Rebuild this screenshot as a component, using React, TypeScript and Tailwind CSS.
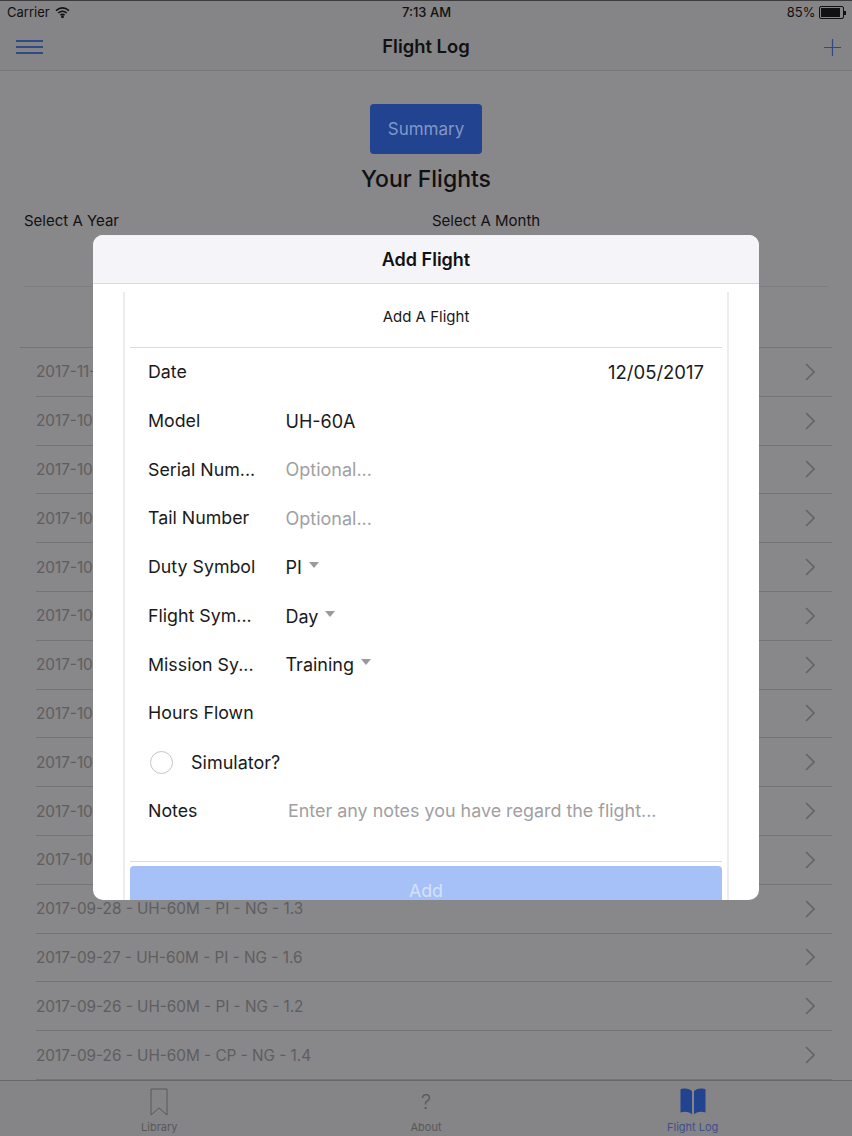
const flights = [
  "2017-11-02 - UH-60M - PI - NG - 1.5",
  "2017-10-30 - UH-60M - PI - NG - 1.2",
  "2017-10-27 - UH-60M - CP - NG - 1.1",
  "2017-10-26 - UH-60M - PI - NG - 1.4",
  "2017-10-24 - UH-60M - PI - NG - 1.3",
  "2017-10-20 - UH-60M - CP - NG - 1.6",
  "2017-10-18 - UH-60M - PI - NG - 1.2",
  "2017-10-16 - UH-60M - PI - NG - 1.0",
  "2017-10-12 - UH-60M - CP - NG - 1.5",
  "2017-10-10 - UH-60M - PI - NG - 1.3",
  "2017-10-04 - UH-60M - PI - NG - 1.1",
  "2017-09-28 - UH-60M - PI - NG - 1.3",
  "2017-09-27 - UH-60M - PI - NG - 1.6",
  "2017-09-26 - UH-60M - PI - NG - 1.2",
  "2017-09-26 - UH-60M - CP - NG - 1.4",
]

function Caret() {
  return <span className="ml-[7px] mb-[5px] h-0 w-0 border-x-[5.5px] border-t-[6px] border-x-transparent border-t-[#9a9a9c]" />
}

function FormRow({ label, value, caret, muted }: { label: string; value?: string; caret?: boolean; muted?: boolean }) {
  return (
    <div className="flex h-[48.75px] items-center pl-[18px]">
      <span className="w-[137.5px] shrink-0 text-[#1a1a1a]">{label}</span>
      <span className={muted ? "text-[18px] text-[#a0a0a3]" : "text-[18px] text-[#1a1a1a]"}>{value}</span>
      {caret && <Caret />}
    </div>
  )
}

export default function App() {
  return (
    <div className="relative flex h-[1136px] w-[852px] flex-col overflow-hidden bg-[#888789] font-['Inter',sans-serif]">
      {/* Status bar */}
      <div className="grid h-[24px] shrink-0 grid-cols-3 items-center border-t border-t-[#3c3c3e] bg-[#858486] pl-[7px] pr-[6px] text-[13px] text-[#111]">
        <div className="flex items-center gap-[5px]">
          <span>Carrier</span>
          <svg width="15" height="11" viewBox="0 0 15 11" fill="none" stroke="#111" strokeWidth="1.6">
            <path d="M1 3.6C5 .3 10 .3 14 3.6" />
            <path d="M3.2 6C5.8 3.9 9.2 3.9 11.8 6" />
            <path d="M5.4 8.2C6.6 7.2 8.4 7.2 9.6 8.2" />
            <circle cx="7.5" cy="9.8" r=".6" fill="#111" />
          </svg>
        </div>
        <span className="text-center font-medium">7:13 AM</span>
        <div className="flex items-center justify-end gap-[4px]">
          <span>85%</span>
          <div className="flex items-center">
            <div className="h-[13px] w-[25px] rounded-[2px] border border-[#111] p-[1px]">
              <div className="h-full w-[88%] bg-[#111]" />
            </div>
            <div className="h-[4px] w-[1.5px] bg-[#111]" />
          </div>
        </div>
      </div>

      {/* Nav bar */}
      <div className="grid h-[47px] shrink-0 grid-cols-3 items-center border-b border-b-[#767577] bg-[#858486] px-[11px]">
        <svg className="ml-[5px]" width="28" height="16" viewBox="0 0 28 16" stroke="#2f4a86" strokeWidth="2">
          <path d="M0 2H27M0 8H27M0 14H27" />
        </svg>
        <span className="text-center text-[18.4px] font-semibold text-[#111]">Flight Log</span>
        <svg className="justify-self-end" width="17" height="17" viewBox="0 0 17 17" stroke="#2f4a86" strokeWidth="1.2">
          <path d="M8.500 0V17M0 8.500H17" />
        </svg>
      </div>

      {/* Page content */}
      <div className="flex min-h-0 flex-1 flex-col overflow-hidden">
        <div className="flex flex-col items-center pt-[33px]">
          <div className="flex h-[50px] w-[112px] items-center justify-center rounded-[4px] bg-[#22438f] pt-[2px] text-[17px] text-[#8097c9]">
            Summary
          </div>
          <h1 className="mt-[10px] text-[23px] leading-[30px] font-medium text-[#111]">Your Flights</h1>
        </div>
        <div className="mt-[15px] flex text-[15px] leading-[24px] text-[#111]">
          <span className="w-[432px] pl-[24px]">Select A Year</span>
          <span>Select A Month</span>
        </div>
        <div className="mx-[24px] mt-[53px] h-[1px] bg-[#7d7c7e]" />
        <div className="mx-[20px] mt-[60px] h-[1px] bg-[#737274]" />
        <div className="ml-[36px] mr-[20px]">
          {flights.map((f, i) => (
            <div key={i} className="flex h-[48.8px] items-center justify-between border-b border-b-[#737274] pr-[17px] pt-[2px] text-[15.3px] text-[#5e5e60]">
              <span>{f}</span>
              <svg className="-mt-[2px]" width="10" height="18" viewBox="0 0 10 18" fill="none" stroke="#646466" strokeWidth="1.6">
                <path d="M1 1L9 9L1 17" />
              </svg>
            </div>
          ))}
        </div>
      </div>

      {/* Tab bar */}
      <div className="grid h-[56px] shrink-0 grid-cols-3 border-t border-t-[#69686a] bg-[#858486] px-[26px] text-[11px] text-[#58585a]">
        <div className="flex flex-col items-center pt-[7px]">
          <svg width="18" height="28" viewBox="0 0 18 28" fill="none" stroke="#58585a" strokeWidth="1">
            <path d="M1 1H17V27L9 20L1 27Z" />
          </svg>
          <span className="mt-[5px] leading-[13px]">Library</span>
        </div>
        <div className="flex flex-col items-center pt-[7px]">
          <span className="flex h-[28px] items-center text-[20px] leading-none font-light">?</span>
          <span className="mt-[5px] leading-[13px]">About</span>
        </div>
        <div className="flex flex-col items-center pt-[7px] text-[#3f4f8e]">
          <svg width="26" height="27" viewBox="0 0 26 27" fill="#22438f">
            <path d="M12 3.500C11 1.500 8 .5 4.500.5 3 .5 1.500.8.5 1.200V24.500C2 24 3.500 23.800 5 23.800c3 0 5.500.8 7 2.700Z" />
            <path d="M14 3.500C15 1.500 18 .5 21.500.5c1.500 0 3 .3 4 .7V24.500c-1.500-.5-3-.7-4.500-.7-3 0-5.500.8-7 2.700Z" />
          </svg>
          <span className="mt-[6px] leading-[13px]">Flight Log</span>
        </div>
      </div>

      {/* Add Flight modal */}
      <div className="absolute left-[93px] top-[235px] flex h-[665px] w-[666px] flex-col overflow-hidden rounded-[10px] bg-white text-[17.8px]">
        <div className="flex h-[49px] shrink-0 items-center justify-center border-b border-b-[#d9d8dd] bg-[#f5f4f8] text-[18px] font-semibold text-[#111]">
          Add Flight
        </div>
        <div className="mx-[30px] mt-[8px] flex-1 border-x-2 border-x-[#ecebf0] px-[5px]">
          <div className="flex h-[56px] items-center justify-center border-b border-b-[#dcdcdf] pb-[5px] text-[15px] text-[#1a1a1a]">
            Add A Flight
          </div>
          <div className="flex h-[48.75px] items-center justify-between px-[18px] text-[#1a1a1a]">
            <span>Date</span>
            <span className="text-[18.5px]">12/05/2017</span>
          </div>
          <FormRow label="Model" value="UH-60A" />
          <FormRow label="Serial Num..." value="Optional..." muted />
          <FormRow label="Tail Number" value="Optional..." muted />
          <FormRow label="Duty Symbol" value="PI" caret />
          <FormRow label="Flight Sym..." value="Day" caret />
          <FormRow label="Mission Sy..." value="Training" caret />
          <FormRow label="Hours Flown" />
          <div className="flex h-[48.75px] items-center pl-[20px] text-[#1a1a1a]">
            <span className="h-[23px] w-[23px] rounded-full border border-[#c4c4c8]" />
            <span className="ml-[18px] text-[18px]">Simulator?</span>
          </div>
          <div className="flex h-[48.75px] items-center pl-[18px] pt-[1px]">
            <span className="w-[140px] shrink-0 text-[#1a1a1a]">Notes</span>
            <span className="text-[17.9px] text-[#a0a0a3]">Enter any notes you have regard the flight...</span>
          </div>
          <div className="mt-[25px] border-t border-t-[#dcdcdf] pt-[4px]">
            <div className="flex h-[52px] items-center justify-center rounded-t-[4px] bg-[#a5c1f8] text-[#d5e2fb]">Add</div>
          </div>
        </div>
      </div>
    </div>
  )
}
